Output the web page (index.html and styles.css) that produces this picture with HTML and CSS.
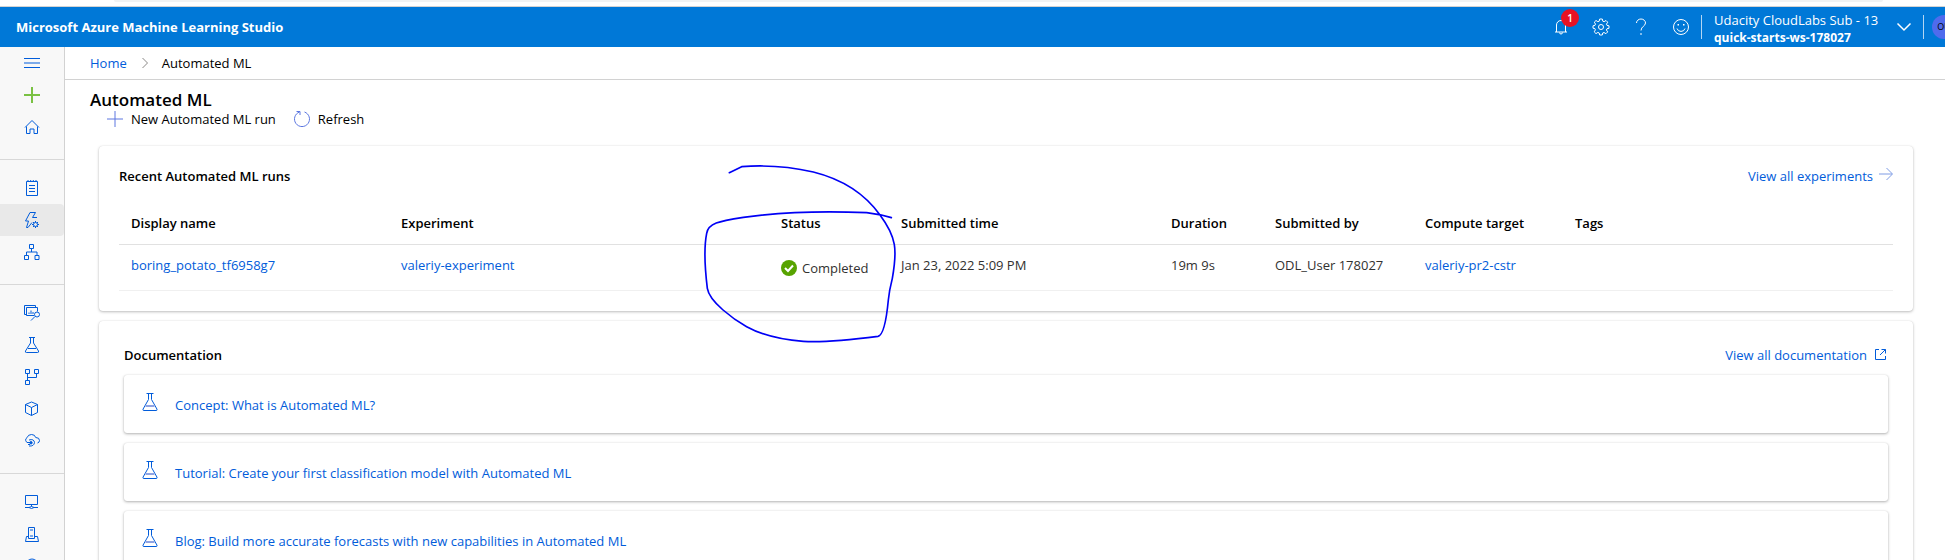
FILE: index.html
```html
<!DOCTYPE html>
<html lang="en">
<head>
<meta charset="utf-8">
<title>Automated ML - Microsoft Azure Machine Learning Studio</title>
<link rel="stylesheet" href="styles.css">
</head>
<body>
<svg class="defs" aria-hidden="true">
  <symbol id="flask" viewBox="0 0 16 18"><path d="M4.500 .5h7M6.500 .5v6L1 16.200q-.4 1.300.8 1.300h12.400q1.200 0 .8-1.300L9.500 6.500v-6"/><path class="level" d="M3.500 13h9"/></symbol>
</svg>
<div class="app">
  <div class="browser-edge"><div class="address-bar"></div></div>
  <header class="topbar">
    <div class="brand">Microsoft Azure Machine Learning Studio</div>
    <div class="actions">
      <button class="action" aria-label="Notifications">
        <svg width="16" height="18" viewBox="0 0 16 18"><path d="M2 14h12M3.500 14V7a4.500 4.500 0 0 1 9 0v7M6.500 14.500a1.500 1.500 0 0 0 3 0"/></svg>
        <span class="badge">1</span>
      </button>
      <button class="action" aria-label="Settings">
        <svg width="18" height="18" viewBox="0 0 18 18"><circle cx="9" cy="9" r="2.500"/><path d="M7.700 1h2.600l.5 2.200 1.300.5L14 2.500 15.700 4.200l-1.200 1.900.5 1.300 2 .4v2.500l-2 .4-.6 1.300 1.300 1.900-1.800 1.800-1.900-1.200-1.300.5-.4 2H7.700l-.5-2-1.300-.6L4 15.600l-1.800-1.800 1.200-1.900-.5-1.300-1.900-.4V7.800l2-.5.5-1.200L2.300 4.200 4 2.500l1.900 1.200 1.300-.5z"/></svg>
      </button>
      <button class="action" aria-label="Help">
        <svg width="16" height="18" viewBox="0 0 16 18"><path d="M3.500 5a4.500 4 0 0 1 9 0c0 3-4.500 3.600-4.500 7.500M8 15v2"/></svg>
      </button>
      <button class="action" aria-label="Feedback">
        <svg width="18" height="18" viewBox="0 0 18 18"><circle cx="9" cy="9" r="7.500"/><path d="M5 10.500a4.200 4.200 0 0 0 8 0"/><path class="fill-white" d="M5.500 6h1.500v1.500H5.500zM11 6h1.500v1.500H11z"/></svg>
      </button>
      <button class="workspace">
        <span class="workspace-names"><span class="subscription">Udacity CloudLabs Sub - 13</span><strong>quick-starts-ws-178027</strong></span>
        <svg width="16" height="10" viewBox="0 0 16 10"><path d="M1.500 1.500 8 8l6.500-6.500"/></svg>
      </button>
      <button class="avatar" aria-label="Account">OU</button>
    </div>
  </header>
  <div class="body">
    <nav class="sidebar" aria-label="Main">
      <div class="group">
        <a href="#" aria-label="Menu"><svg viewBox="0 0 16 16"><path d="M0 3.500h16M0 8h16M0 12.500h16"/></svg></a>
        <a href="#" class="new" aria-label="New"><svg viewBox="0 0 16 16"><path d="M0 8h16M8 0v16"/></svg></a>
        <a href="#" aria-label="Home"><svg viewBox="0 0 16 16"><path d="M1 8.500 8 1.500l7 7M2.500 7.500v7h3.500V10h4v4.500h3.500v-7"/></svg></a>
      </div>
      <div class="group">
        <a href="#" aria-label="Notebooks"><svg viewBox="0 0 16 16"><path d="M2.500 1.500h11v14h-11zM5 5.500h6M5 8.500h6M5 11.500h6M4 0v2M6.700 0v2M9.300 0v2M12 0v2"/></svg></a>
        <a href="#" class="active" aria-label="Automated ML"><svg viewBox="0 0 16 16"><path d="M6 .5h5.500L8.500 5.500H13M6 .5 1.500 9h3L2.500 15.500h1.500l4-5"/><circle cx="11.500" cy="12.500" r="2"/><path d="M11.500 9v1.500M11.500 14.500V16M8 12.500h1.500M13.500 12.500H15M9 10l1 1M13 14l1 1M14 10l-1 1M10 14l-1 1"/></svg></a>
        <a href="#" aria-label="Designer"><svg viewBox="0 0 16 16"><path d="M5.500.5h4v4h-4zM.5 11.500h4v4h-4zM11 11.500h4v4h-4zM7.500 4.500V8M2.500 11.500V8H13v3.500"/></svg></a>
      </div>
      <div class="group">
        <a href="#" aria-label="Datasets"><svg viewBox="0 0 16 16"><path d="M2 9.500H.5v-9h11V2M10 10.500H2.500v-8h11v4M5 9V7.500M7 9V5.500M9 9V7"/><circle cx="13" cy="9.500" r="2.500"/><path d="m11 11.500-4 4"/></svg></a>
        <a href="#" aria-label="Experiments"><svg viewBox="0 0 16 16"><path d="M5 .5h6M6.500.5V6L1.500 14q-.5 1.500.8 1.500h11.400q1.300 0 .8-1.500l-5-8V.5M4 11.500h8"/></svg></a>
        <a href="#" aria-label="Pipelines"><svg viewBox="0 0 16 16"><path d="M1.500.5h4v4h-4zM10.500.5h4v4h-4zM1.500 11.500h4v4h-4zM3.500 4.500v7M3.500 8.500h9v-4"/></svg></a>
        <a href="#" aria-label="Models"><svg viewBox="0 0 16 16"><path d="m7.500 1 6 2.500v8l-6 3-6-3v-8zM1.500 3.500l6 3 6-3M7.500 6.500v8"/></svg></a>
        <a href="#" aria-label="Endpoints"><svg viewBox="0 0 16 16"><path d="M3.500 9.500A2.600 2.600 0 0 1 3 4.700Q4 1.500 7.500 1.500q3.500 0 4.200 3Q15.500 4.500 15.500 7.500q0 2-2 2.500M5 7q5-1.500 5.500 2.500-.5 4-5.500 3.500M3 9.500h4M4 11.500h2"/><circle class="solid" cx="7" cy="9.800" r="1.200"/></svg></a>
      </div>
      <div class="group">
        <a href="#" aria-label="Compute"><svg viewBox="0 0 16 16"><path d="M1.500 1.500h12v9h-12zM7.500 10.500v2M1 13.500h4M10 13.500h4M5 13.500q2.500-2 5 0-2.500 2-5 0"/></svg></a>
        <a href="#" aria-label="Datastores"><svg viewBox="0 0 16 16"><path d="M4.500 12.500v-11h6v11zM6 4h3M6 10h3M4.500 10.500h-2l-1 5h13l-1-5h-3"/></svg></a>
        <a href="#" aria-label="Data labeling"><svg viewBox="0 0 16 16"><circle cx="8" cy="7" r="6"/></svg></a>
      </div>
    </nav>
    <main class="main">
      <nav class="breadcrumb" aria-label="Breadcrumb">
        <a href="#">Home</a>
        <svg width="6" height="12" viewBox="0 0 6 12"><path d="m.5 1 5 5-5 5"/></svg>
        <span>Automated ML</span>
      </nav>
      <h1>Automated ML</h1>
      <div class="toolbar">
        <button><svg width="16" height="16" viewBox="0 0 16 16"><path d="M0 8h16M8 0v16"/></svg>New Automated ML run</button>
        <button><svg width="16" height="16" viewBox="0 0 16 16"><path d="M10.500 1a7.500 7.500 0 1 1-5 0M2.500.5h3.500v3.500"/></svg>Refresh</button>
      </div>
      <section class="card runs">
        <div class="card-head">
          <h2>Recent Automated ML runs</h2>
          <a href="#">View all experiments<svg class="arrow" width="14" height="14" viewBox="0 0 14 14"><path d="M0 7h13M7.500 1l6 6-6 6"/></svg></a>
        </div>
        <table>
          <colgroup><col class="w270"><col class="w380"><col class="w120"><col class="w270"><col class="w104"><col class="w150"><col class="w150"><col></colgroup>
          <thead>
            <tr><th>Display name</th><th>Experiment</th><th>Status</th><th>Submitted time</th><th>Duration</th><th>Submitted by</th><th>Compute target</th><th>Tags</th></tr>
          </thead>
          <tbody>
            <tr>
              <td><a href="#">boring_potato_tf6958g7</a></td>
              <td><a href="#">valeriy-experiment</a></td>
              <td><span class="status"><svg width="16" height="16" viewBox="0 0 16 16"><circle cx="8" cy="8" r="8"/><path d="m4 8 3 3 5-5.500"/></svg>Completed</span></td>
              <td>Jan 23, 2022 5:09 PM</td>
              <td>19m 9s</td>
              <td>ODL_User 178027</td>
              <td><a href="#">valeriy-pr2-cstr</a></td>
              <td></td>
            </tr>
          </tbody>
        </table>
      </section>
      <section class="card docs">
        <div class="card-head">
          <h2>Documentation</h2>
          <a href="#">View all documentation<svg width="11" height="11" viewBox="0 0 11 11"><path d="M4 .5H.5v10h10V7M6.500.5h4v4M10.500.5 5 6"/></svg></a>
        </div>
        <a href="#" class="doc"><svg><use href="#flask"/></svg><span>Concept: What is Automated ML?</span></a>
        <a href="#" class="doc"><svg><use href="#flask"/></svg><span>Tutorial: Create your first classification model with Automated ML</span></a>
        <a href="#" class="doc"><svg><use href="#flask"/></svg><span>Blog: Build more accurate forecasts with new capabilities in Automated ML</span></a>
      </section>
    </main>
  </div>
  <svg class="ink" viewBox="0 0 1140 600" aria-hidden="true"><path d="M148 68 185 50C250 45 330 50 400 66C480 86 550 125 600 195C650 262 652 300 637 385Q628 420 625 450Q615 555 594 559C500 571 430 578 370 574C290 568 240 552 200 530C160 508 88 455 82 415C74 350 72 290 80 250C85 220 115 214 190 202C320 184 450 183 560 188Q600 193 634 203"/></svg>
</div>
</body>
</html>
```
FILE: styles.css
```css
* { box-sizing: border-box; }
body {
  margin: 0;
  background: #fff;
  color: #000;
  font: 13px/20px "Open Sans", "Noto Sans", sans-serif;
}
a { color: #015cda; text-decoration: none; }
button { border: 0; padding: 0; background: none; color: inherit; font: inherit; }
svg { flex: none; fill: none; stroke: #015cda; }
h1, h2 { margin: 0; font-weight: 600; }
.defs { position: absolute; width: 0; height: 0; }

.app { position: relative; display: flex; flex-direction: column; height: 100vh; overflow: hidden; }
.browser-edge { flex: none; height: 7px; padding: 0 62px 0 114px; border-bottom: 1px solid #d3d3d3; }
.address-bar { height: 2px; background: #f1f3f4; border-radius: 0 0 8px 8px; }

.topbar { flex: none; display: flex; align-items: center; justify-content: space-between; height: 40px; padding-left: 16px; background: #0078d7; color: #fff; }
.topbar svg { stroke: #fff; }
.topbar .fill-white { fill: #fff; stroke: none; }
.brand { font-weight: 700; }
.actions { display: flex; align-items: center; height: 40px; margin-right: -11px; }
.action { position: relative; display: grid; place-items: center; width: 40px; height: 40px; }
.badge { position: absolute; top: 2px; left: 20px; width: 18px; height: 18px; border-radius: 50%; background: #e81123; font-size: 10px; font-weight: 600; line-height: 18px; }
.workspace { display: flex; align-items: center; justify-content: space-between; width: 223px; height: 24px; padding: 0 11px 0 12px; border: solid #b3d6f3; border-width: 0 1px; }
.workspace-names { display: flex; flex-direction: column; padding-top: 3px; text-align: left; line-height: 17px; white-space: nowrap; }
.workspace-names strong { font-size: 12px; }
.workspace svg { stroke-width: 1.500; }
.avatar { width: 24px; height: 24px; margin-left: 8px; border-radius: 50%; background: #4f6bed; color: #000; font-size: 9px; line-height: 24px; }

.body { flex: 1; display: flex; min-height: 0; }
.sidebar { flex: none; width: 65px; overflow: hidden; background: #f8f8f8; border-right: 1px solid #d2d2d2; }
.group { padding-bottom: 16px; }
.group + .group { padding-top: 12px; border-top: 1px solid #d8d8d8; }
.group a { display: grid; place-items: center; height: 32px; border-radius: 0 4px 4px 0; }
.group .active { background: #e9e9e9; }
.group svg { width: 16px; height: 16px; }
.group .solid { fill: #015cda; }
.group .new svg { stroke: #7ac143; stroke-width: 2; }

.main { flex: 1; min-width: 0; overflow: hidden; }
.breadcrumb { display: flex; align-items: center; height: 33px; padding-left: 25px; border-bottom: 1px solid #d2d2d2; }
.breadcrumb svg { margin: 0 14px 0 15px; stroke: #8a8886; }
h1 { padding: 9px 0 0 25px; font-size: 17px; line-height: 22px; }
.toolbar { display: flex; gap: 18px; height: 16px; padding-left: 42px; }
.toolbar button { display: flex; align-items: center; gap: 8px; height: 16px; }
.toolbar svg { stroke: #5c77e0; }

.card { margin: 0 32px 10px 34px; border-radius: 4px; box-shadow: 0 1px 3px rgba(0, 0, 0, .26), 0 0 1px rgba(0, 0, 0, .14); }
.card-head { display: flex; align-items: center; justify-content: space-between; height: 20px; }
.card-head h2 { font-size: 13px; }
.card-head a { display: flex; align-items: center; gap: 8px; }
.runs { margin-top: 19px; padding: 20px 20px 20px; }
.runs .card-head a { gap: 6px; }
.card-head .arrow { margin-bottom: 4px; stroke: #7f9ce5; }

table { width: 100%; margin-top: 16px; border-collapse: collapse; table-layout: fixed; }
th, td { height: 46px; padding: 0 12px; text-align: left; white-space: nowrap; }
th { height: 42px; font-weight: 600; border-bottom: 1px solid #e1e1e1; }
td { color: #323130; border-bottom: 1px solid #f0f0f0; padding-bottom: 4px; }
.w104 { width: 104px; }
.w120 { width: 120px; }
.w150 { width: 150px; }
.w270 { width: 270px; }
.w380 { width: 380px; }
.status { display: flex; align-items: center; gap: 5px; padding-top: 6px; }
.status svg { stroke: none; fill: #57a300; }
.status path { fill: none; stroke: #fff; stroke-width: 2; }

.docs { padding: 24px 25px; }
.docs .card-head { margin-bottom: 10px; padding-right: 2px; }
.doc { display: flex; gap: 17px; height: 58px; margin-bottom: 10px; padding: 18px; border-radius: 3px; box-shadow: 0 1px 3px rgba(0, 0, 0, .3), 0 0 1px rgba(0, 0, 0, .14); }
.doc svg { width: 16px; height: 18px; }
.level { stroke: #8fa3e3; stroke-width: 2; }
.doc span { padding-top: 2px; }

.ink { position: absolute; left: 680px; top: 150px; width: 380px; height: 200px; pointer-events: none; }
.ink path { stroke: #0000f5; stroke-width: 5; stroke-linecap: round; stroke-linejoin: round; }
```
